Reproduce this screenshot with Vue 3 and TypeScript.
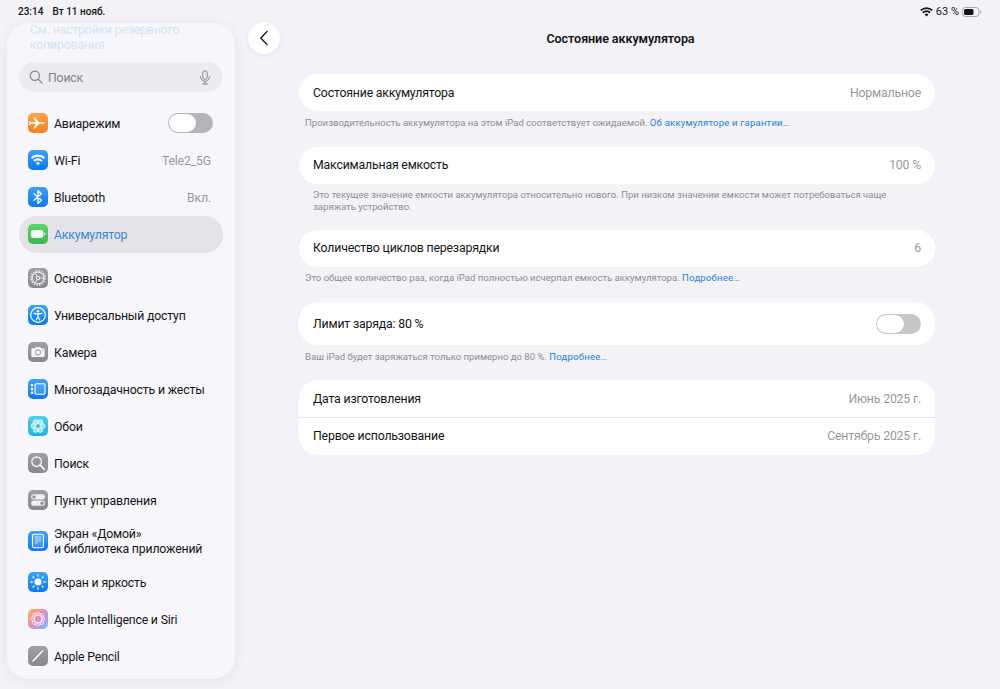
<template>
  <div class="page">
    <header class="status">
      <div class="status-left"><span>23:14</span><span>Вт 11 нояб.</span></div>
      <div class="status-right">
        <svg width="13" height="10" viewBox="0 0 13 10">
          <path d="M6.500 9.600 4.600 7.500a2.700 2.700 0 0 1 3.800 0z" fill="#111" />
          <path d="M3.600 6.400 2.300 5a6 6 0 0 1 8.400 0L9.400 6.400a4.200 4.200 0 0 0-5.800 0z" fill="#111" />
          <path d="M1.400 4 .2 2.700a9 9 0 0 1 12.600 0L11.600 4a7.300 7.300 0 0 0-10.200 0z" fill="#111" />
        </svg>
        <span>63 %</span>
        <svg width="20" height="10" viewBox="0 0 20 10">
          <rect x=".5" y=".5" width="16.500" height="9" rx="3" fill="none" stroke="#a9a9ab" />
          <rect x="2" y="2" width="9.500" height="6" rx="1.600" fill="#111" />
          <path d="M18.200 3.400c.9.300 1.300.8 1.300 1.600s-.4 1.300-1.300 1.600z" fill="#a9a9ab" />
        </svg>
      </div>
    </header>

    <div class="body">
      <aside class="sidebar">
        <div class="backup-hint">См. настройки резервного копирования</div>
        <div class="search">
          <svg width="14" height="14" viewBox="0 0 14 14" fill="none" stroke="#85858b" stroke-width="1.200">
            <circle cx="5.800" cy="5.800" r="4.600" />
            <path d="m9.200 9.200 3.800 3.800" stroke-linecap="round" />
          </svg>
          <span class="search-label">Поиск</span>
          <svg class="mic" width="12" height="15" viewBox="0 0 12 15" fill="none" stroke="#85858b" stroke-width="1">
            <rect x="3.800" y=".8" width="4.400" height="8.600" rx="2.200" />
            <path d="M1.500 6.800a4.500 4.500 0 0 0 9 0M6 11.300v2.700M3.500 14h5" stroke-linecap="round" />
          </svg>
        </div>

        <div v-for="(group, index) in menuGroups" :key="index" class="menu-group">
          <div
            v-for="item in group"
            :key="item.icon"
            class="menu-row"
            :class="{ 'menu-row--active': item.active, 'menu-row--tall': item.sublabel }"
          >
            <span class="menu-icon" :class="`menu-icon--${item.icon}`">
              <svg width="20" height="20" viewBox="0 0 20 20">
                <path v-if="item.icon === 'plane'" fill="#fff" d="M3 9.200h4.800L5.200 4.500h1.600l4.400 4.700h4c.9 0 1.800.3 1.800.8s-.9.800-1.800.8h-4l-4.400 4.700H5.200l2.600-4.700H3L1.800 12H.9l.7-2-.7-2h.9z" />
                <g v-else-if="item.icon === 'wifi'">
                  <path fill="#fff" d="M10 15.300 7.900 13a3 3 0 0 1 4.200 0z" />
                  <path fill="#fff" d="M6.700 11.800 5.300 10.300a6.700 6.700 0 0 1 9.400 0l-1.400 1.500a4.700 4.700 0 0 0-6.600 0z" />
                  <path fill="#fff" d="M4.200 9.100 2.800 7.600a10.100 10.100 0 0 1 14.400 0l-1.400 1.500a8.100 8.100 0 0 0-11.600 0z" />
                </g>
                <path v-else-if="item.icon === 'bluetooth'" fill="none" stroke="#fff" stroke-width="1.300" stroke-linejoin="round" stroke-linecap="round" d="m6 6.700 7.400 6.500-3.500 3.200V3.600l3.500 3.200L6 13.300" />
                <g v-else-if="item.icon === 'battery'">
                  <rect x="2.800" y="6" width="12.600" height="8" rx="2.400" fill="#fff" fill-opacity=".92" />
                  <path fill="#fff" fill-opacity=".7" d="M16.200 8.300c.9.200 1.300.9 1.300 1.700s-.4 1.500-1.300 1.700z" />
                </g>
                <g v-else-if="item.icon === 'gear'" fill="none" stroke="#fff">
                  <circle cx="10" cy="10" r="7" stroke-width="1.600" stroke-dasharray="1.600 1.150" stroke-opacity=".8" />
                  <circle cx="10" cy="10" r="5.800" stroke-width="1" stroke-opacity=".85" />
                  <circle cx="10" cy="10" r="1.700" stroke-width=".9" />
                  <path stroke-width=".8" d="M11.700 10h4M9.100 8.500l-2-3.400M9.100 11.500l-2 3.400" />
                </g>
                <g v-else-if="item.icon === 'access'">
                  <circle cx="10" cy="10" r="7.300" fill="none" stroke="#fff" stroke-width="1.200" />
                  <circle cx="10" cy="6.300" r="1.300" fill="#fff" />
                  <path fill="none" stroke="#fff" stroke-width="1.200" stroke-linecap="round" stroke-linejoin="round" d="M6 8.300c2.700.7 5.300.7 8 0M10 8.800v3M10 11.800l-1.800 3.200M10 11.800l1.800 3.200" />
                </g>
                <g v-else-if="item.icon === 'camera'">
                  <path fill="#f4f4f6" d="M4.600 6.300h2.300l1-1.400h4.200l1 1.400h2.300c.8 0 1.300.5 1.300 1.300v6.200c0 .8-.5 1.300-1.300 1.300H4.600c-.8 0-1.300-.5-1.300-1.300V7.600c0-.8.500-1.300 1.300-1.300z" />
                  <circle cx="10" cy="10.400" r="2.600" fill="none" stroke="#929297" stroke-width="1" />
                  <circle cx="15" cy="7.900" r=".6" fill="#929297" />
                </g>
                <g v-else-if="item.icon === 'multi'">
                  <rect x="7" y="4.700" width="10" height="10.600" rx="1.200" fill="#fff" fill-opacity=".15" stroke="#fff" stroke-width="1.100" />
                  <rect x="2.800" y="5" width="2.400" height="2.400" rx=".6" fill="#fff" />
                  <rect x="2.800" y="8.800" width="2.400" height="2.400" rx=".6" fill="#fff" />
                  <rect x="2.800" y="12.600" width="2.400" height="2.400" rx=".6" fill="#fff" />
                </g>
                <g v-else-if="item.icon === 'wallpaper'">
                  <circle v-for="petal in petals" :key="petal.x" :cx="petal.x" :cy="petal.y" r="2.500" fill="#fff" fill-opacity=".55" stroke="#fff" stroke-width=".6" />
                </g>
                <g v-else-if="item.icon === 'find'" fill="none" stroke="#fff">
                  <circle cx="8.600" cy="8.600" r="4.800" stroke-width="1.200" />
                  <path d="m12.200 12.200 4.300 4.300" stroke-width="1.700" stroke-linecap="round" />
                </g>
                <g v-else-if="item.icon === 'control'">
                  <rect x="3.200" y="4.300" width="13.600" height="5.200" rx="2.600" fill="#f1f1f3" />
                  <circle cx="6" cy="6.900" r="1.700" fill="#929297" />
                  <rect x="3.200" y="10.600" width="13.600" height="5.200" rx="2.600" fill="#f1f1f3" />
                  <circle cx="14" cy="13.200" r="1.700" fill="#929297" />
                </g>
                <g v-else-if="item.icon === 'home'">
                  <rect x="4.500" y="3.200" width="11" height="13.600" rx="1.500" fill="#fff" fill-opacity=".15" stroke="#fff" stroke-width="1.100" />
                  <path fill="none" stroke="#fff" stroke-width=".9" stroke-opacity=".75" d="M6.800 6h6.400M6.800 8h6.400M6.800 10h6.400M6.800 12h3" />
                </g>
                <g v-else-if="item.icon === 'sun'">
                  <circle cx="10" cy="10" r="3.500" fill="#fff" />
                  <path fill="none" stroke="#fff" stroke-width="1.300" stroke-linecap="round" d="M10 2.900v1.300M10 15.800v1.300M2.900 10h1.300M15.800 10h1.300M5 5l.9.900M14.100 14.100l.9.900M5 15l.9-.9M14.100 5.900l.9-.9" />
                </g>
                <g v-else-if="item.icon === 'siri'" fill="none" stroke="#fff" stroke-opacity=".8" stroke-width=".8">
                  <ellipse v-for="angle in [0, 45, 90, 135]" :key="angle" cx="10" cy="10" rx="7" ry="3.600" :transform="`rotate(${angle} 10 10)`" />
                </g>
                <g v-else-if="item.icon === 'pencil'">
                  <path fill="none" stroke="#fff" stroke-width="1.500" stroke-linecap="round" d="m5 15 9.600-10" />
                </g>
              </svg>
            </span>
            <span class="menu-label">{{ item.label }}<template v-if="item.sublabel"><br />{{ item.sublabel }}</template></span>
            <span v-if="item.value" class="menu-value">{{ item.value }}</span>
            <span v-if="item.toggle" class="toggle toggle--menu"><span class="toggle-knob" /></span>
          </div>
        </div>
      </aside>

      <main class="detail">
        <button class="back" type="button" aria-label="Назад">
          <svg width="10" height="16" viewBox="0 0 10 16" fill="none" stroke="#111" stroke-width="1.200">
            <path d="M8 1.500 1.700 8 8 14.500" stroke-linecap="round" stroke-linejoin="round" />
          </svg>
        </button>

        <div class="content">
          <h1 class="title">Состояние аккумулятора</h1>

          <section class="card">
            <div class="row"><span>Состояние аккумулятора</span><span class="value">Нормальное</span></div>
          </section>
          <p class="note note--flush">
            Производительность аккумулятора на этом iPad соответствует ожидаемой.
            <a>Об аккумуляторе и гарантии…</a>
          </p>

          <section class="card">
            <div class="row"><span>Максимальная емкость</span><span class="value">100 %</span></div>
          </section>
          <p class="note note--inset">
            Это текущее значение емкости аккумулятора относительно нового. При низком значении емкости может потребоваться чаще заряжать устройство.
          </p>

          <section class="card">
            <div class="row"><span>Количество циклов перезарядки</span><span class="value">6</span></div>
          </section>
          <p class="note note--flush">
            Это общее количество раз, когда iPad полностью исчерпал емкость аккумулятора.
            <a>Подробнее…</a>
          </p>

          <section class="card">
            <div class="row row--toggle">
              <span>Лимит заряда: 80 %</span>
              <span class="toggle toggle--light"><span class="toggle-knob" /></span>
            </div>
          </section>
          <p class="note note--flush note--last">
            Ваш iPad будет заряжаться только примерно до 80 %.
            <a>Подробнее…</a>
          </p>

          <section class="card">
            <div class="row row--split"><span>Дата изготовления</span><span class="value">Июнь 2025 г.</span></div>
            <div class="row row--last"><span>Первое использование</span><span class="value">Сентябрь 2025 г.</span></div>
          </section>
        </div>
      </main>
    </div>
  </div>
</template>

<script setup lang="ts">
interface MenuItem {
  icon: string
  label: string
  sublabel?: string
  value?: string
  toggle?: boolean
  active?: boolean
}

const menuGroups: MenuItem[][] = [
  [
    { icon: 'plane', label: 'Авиарежим', toggle: true },
    { icon: 'wifi', label: 'Wi-Fi', value: 'Tele2_5G' },
    { icon: 'bluetooth', label: 'Bluetooth', value: 'Вкл.' },
    { icon: 'battery', label: 'Аккумулятор', active: true },
  ],
  [
    { icon: 'gear', label: 'Основные' },
    { icon: 'access', label: 'Универсальный доступ' },
    { icon: 'camera', label: 'Камера' },
    { icon: 'multi', label: 'Многозадачность и жесты' },
    { icon: 'wallpaper', label: 'Обои' },
    { icon: 'find', label: 'Поиск' },
    { icon: 'control', label: 'Пункт управления' },
    { icon: 'home', label: 'Экран «Домой»', sublabel: 'и библиотека приложений' },
    { icon: 'sun', label: 'Экран и яркость' },
    { icon: 'siri', label: 'Apple Intelligence и Siri' },
    { icon: 'pencil', label: 'Apple Pencil' },
  ],
]

// six petals around the centre of the wallpaper icon
const petals = [0, 60, 120, 180, 240, 300].map((deg) => ({
  x: 10 + 4.6 * Math.cos((deg * Math.PI) / 180),
  y: 10 + 4.6 * Math.sin((deg * Math.PI) / 180),
}))
</script>

<style>
body {
  margin: 0;
  background: #f2f2f7;
}
</style>

<style scoped>
.page {
  width: 1000px;
  height: 689px;
  overflow: hidden;
  display: flex;
  flex-direction: column;
  background: #f2f2f7;
  color: #141416;
  font-family: Roboto, Inter, 'Liberation Sans', sans-serif;
  font-size: 12.3px;
  letter-spacing: -0.18px;
}

.status {
  height: 23px;
  flex: none;
  display: flex;
  align-items: center;
  justify-content: space-between;
  padding: 0 18px;
  font-size: 10px;
  font-weight: 500;
  letter-spacing: 0;
  box-sizing: border-box;
}

.status-left {
  display: flex;
  gap: 9px;
}

.status-right {
  display: flex;
  align-items: center;
  gap: 3px;
  font-weight: 400;
  font-size: 11px;
}

.body {
  flex: 1;
  min-height: 0;
  display: flex;
}

.sidebar {
  width: 228px;
  height: 656px;
  margin-left: 7px;
  flex: none;
  box-sizing: border-box;
  overflow: hidden;
  padding: 0 12px;
  border-radius: 22px;
  background: #f7f7fb;
  box-shadow: 0 2px 14px rgba(60, 60, 90, 0.08);
}

.backup-hint {
  margin: 0 11px;
  width: 180px;
  height: 39px;
  line-height: 15px;
  color: #d3e3f3;
}

.search {
  height: 30px;
  display: flex;
  align-items: center;
  gap: 5px;
  padding: 0 12px 0 10px;
  border-radius: 15px;
  background: #ebebf0;
  margin-bottom: 12.5px;
}

.search-label {
  flex: 1;
  padding-top: 1px;
  color: #85858b;
}

.menu-group {
  margin-bottom: 7px;
}

.menu-row {
  height: 37px;
  display: flex;
  align-items: center;
  padding: 0 12px 0 9px;
  border-radius: 18px;
}

.menu-row--tall {
  height: 45px;
}

.menu-row--active {
  background: #e3e3e9;
  color: #3b86da;
}

.menu-icon {
  width: 20px;
  height: 20px;
  flex: none;
  margin-right: 6px;
  border-radius: 5px;
  background: linear-gradient(180deg, #a0a0a5, #87878c);
}

.menu-icon svg {
  display: block;
}

.menu-icon--plane {
  background: linear-gradient(180deg, #ffa24d, #f5811f);
}

.menu-icon--wifi,
.menu-icon--bluetooth,
.menu-icon--access,
.menu-icon--multi,
.menu-icon--home,
.menu-icon--sun {
  background: linear-gradient(180deg, #3ba2fb, #0c79ee);
}

.menu-icon--battery {
  background: linear-gradient(180deg, #5fd46d, #38b64f);
}

.menu-icon--wallpaper {
  background: linear-gradient(180deg, #4ad0ee, #1fb3da);
}

.menu-icon--siri {
  background: linear-gradient(135deg, #f9b25c 0%, #f08ab0 45%, #a79cf0 75%, #7ccdf2 100%);
}

.menu-label {
  flex: 1;
  padding-top: 2px;
  line-height: 15px;
  white-space: nowrap;
}

.menu-row--tall .menu-label {
  padding-top: 1px;
}

.menu-value {
  padding-top: 2px;
  color: #98989d;
}

.toggle {
  position: relative;
  display: block;
  flex: none;
  width: 45px;
  height: 20px;
  border-radius: 10px;
}

.toggle--menu {
  margin-right: -2px;
  background: #b4b4b9;
}

.toggle--light {
  background: #c6c6c8;
}

.toggle-knob {
  position: absolute;
  left: 1px;
  top: 1px;
  width: 27px;
  height: 18px;
  border-radius: 9px;
  background: #fff;
}

.detail {
  flex: 1;
  display: flex;
  align-items: flex-start;
  gap: 19px;
  padding-left: 13px;
}

.back {
  width: 32px;
  height: 32px;
  flex: none;
  margin-top: -1px;
  padding: 0;
  display: flex;
  align-items: center;
  justify-content: center;
  border: 0;
  border-radius: 50%;
  background: #fff;
  box-shadow: 0 1px 6px rgba(60, 60, 90, 0.08);
}

.content {
  width: 636px;
  flex: none;
}

.title {
  margin: 0;
  height: 51px;
  padding: 8px 0 0 7px;
  box-sizing: border-box;
  font-size: 12.6px;
  line-height: 16px;
  font-weight: 600;
  letter-spacing: -0.1px;
  text-align: center;
}

.card {
  border-radius: 19px;
  background: #fff;
}

.row {
  height: 37px;
  display: flex;
  align-items: center;
  justify-content: space-between;
  padding: 0 14px;
}

.row--toggle {
  height: 43px;
}

.row--split {
  height: 38px;
  box-sizing: border-box;
  border-bottom: 1px solid #e6e6ea;
}

.row--last {
  padding-bottom: 1px;
  box-sizing: border-box;
}

.value {
  color: #98989d;
}

.note {
  margin: 0;
  font-size: 9.55px;
  line-height: 12px;
  letter-spacing: 0;
  color: #8e8e93;
}

.note a {
  color: #2a7fd4;
  letter-spacing: 0.2px;
}

.note--flush {
  padding: 5.5px 6px 18px;
}

.note--inset {
  padding: 5px 14px 17px;
}

.note--last {
  padding-bottom: 17.5px;
}
</style>
